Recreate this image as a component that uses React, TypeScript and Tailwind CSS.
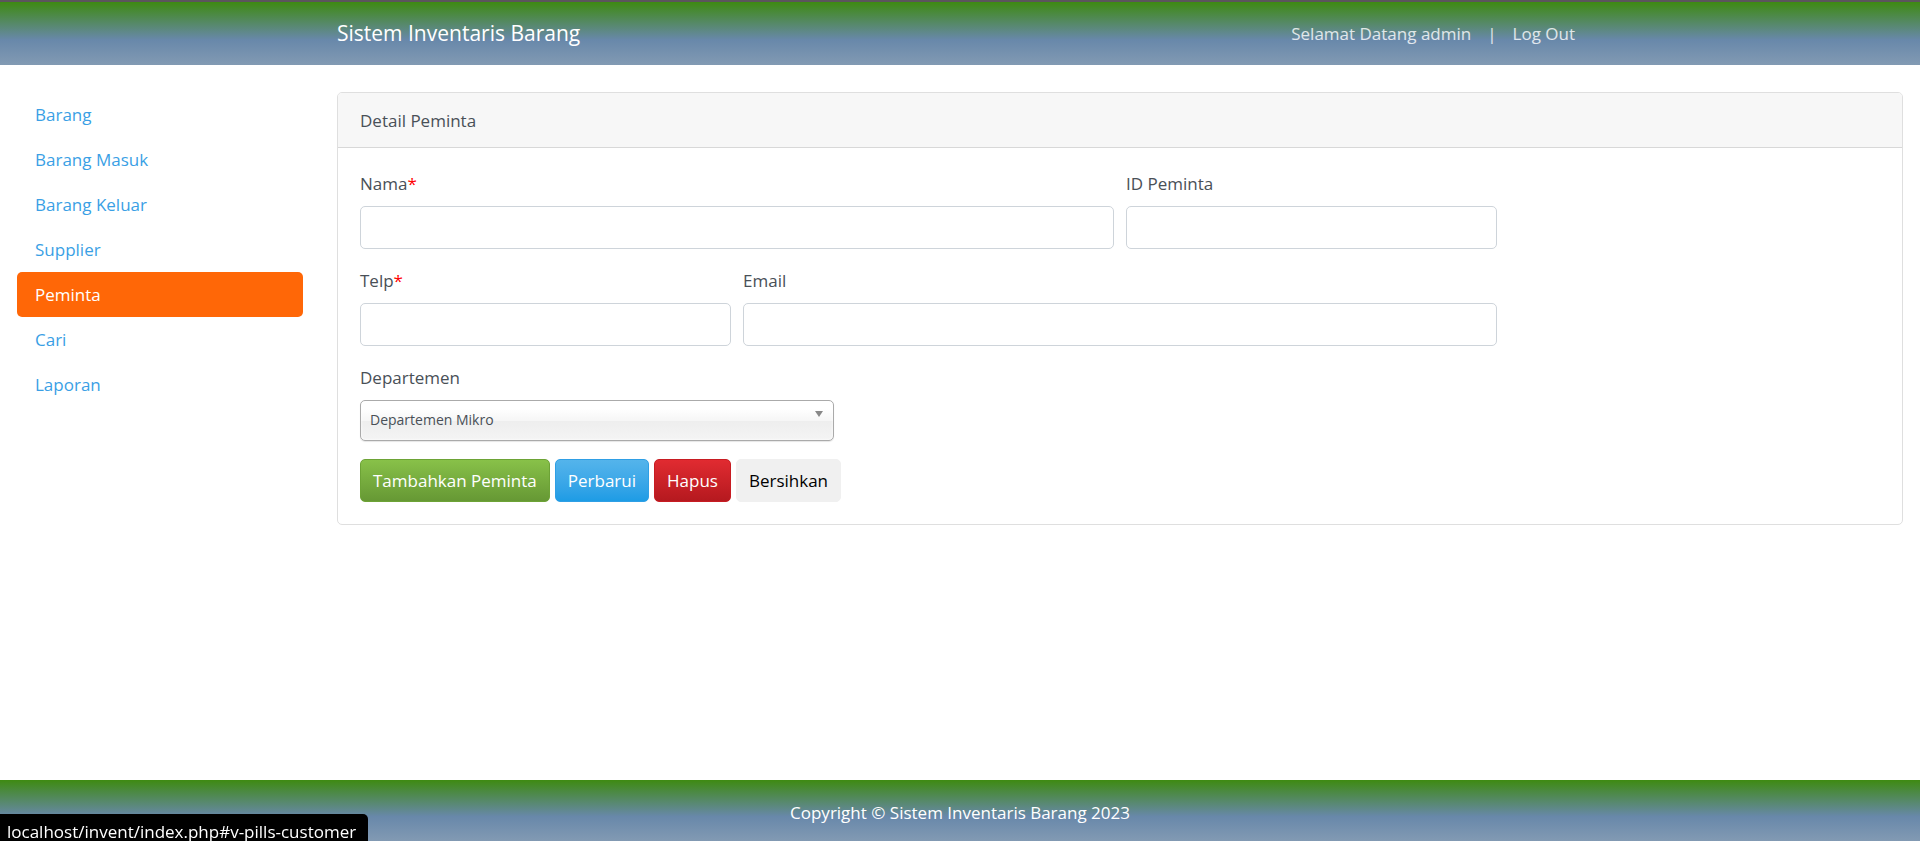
import React from "react";

const navItems = ["Barang", "Barang Masuk", "Barang Keluar", "Supplier", "Peminta", "Cari", "Laporan"];

const barGradient = "bg-[linear-gradient(180deg,#3e8a12_0%,#6888aa_60%,#829ab3_100%)]";

type FieldProps = {
  id: string;
  label: string;
  required?: boolean;
  wide?: boolean;
};

function Field({ id, label, required, wide }: FieldProps) {
  return (
    <div className={wide ? "col-span-6" : "col-span-3"}>
      <label htmlFor={id} className="mb-[9px] block">
        {label}
        {required && <span className="text-[#ff0000]">*</span>}
      </label>
      <input
        id={id}
        type="text"
        className="block h-[43px] w-full rounded-[5px] border border-[#ced4da] bg-white px-3 text-[#495057] outline-none"
      />
    </div>
  );
}

export default function App() {
  return (
    <div className="flex min-h-screen flex-col bg-white font-['Open_Sans','Noto_Sans',sans-serif] text-[17px] leading-[27px] text-[#495057]">
      <header className={`border-t-2 border-[#5c555c] ${barGradient}`}>
        <div className="mx-auto flex h-[63px] max-w-[1280px] items-center justify-between px-[17px]">
          <a href="#" className="text-[21px] text-white">Sistem Inventaris Barang</a>
          <nav className="flex items-center gap-4 pr-2 text-white/80">
            <span>Selamat Datang admin</span>
            <span>|</span>
            <a href="#logout">Log Out</a>
          </nav>
        </div>
      </header>

      <div className="grid grow grid-cols-6 items-start pt-[27px]">
        <nav className="flex flex-col px-[17px]">
          {navItems.map((item) => (
            <a
              key={item}
              href="#"
              className={
                item === "Peminta"
                  ? "rounded-[5px] bg-[#ff6707] px-[18px] py-[9px] text-white"
                  : "rounded-[5px] px-[18px] py-[9px] text-[#3a9fe5]"
              }
            >
              {item}
            </a>
          ))}
        </nav>

        <main className="col-span-5 px-[17px]">
          <section className="rounded-[5px] border border-[#dfdfdf]">
            <h1 className="rounded-t border-b border-[#d8d8d8] bg-[#f7f7f7] px-[22px] pt-[14px] pb-[13px]">Detail Peminta</h1>
            <form className="p-[22px]" onSubmit={(e) => e.preventDefault()}>
              <div className="grid grid-cols-12 gap-x-3 gap-y-[18px]">
                <Field id="nama" label="Nama" required wide />
                <Field id="id-peminta" label="ID Peminta" />
                <div className="col-span-3" />
                <Field id="telp" label="Telp" required />
                <Field id="email" label="Email" wide />
              </div>
              <div className="mt-[18px]">
                <label htmlFor="departemen" className="mb-[9px] block">Departemen</label>
                <div className="relative w-[474px] max-w-full">
                  <select
                    id="departemen"
                    className="block h-[41px] w-full appearance-none rounded-[5px] border border-[#aaaaaa] bg-[linear-gradient(180deg,#ffffff_20%,#f6f6f6_50%,#eeeeee_52%,#f4f4f4_100%)] px-[9px] pb-[2px] text-sm text-[#495057] shadow-[inset_0_0_3px_#ffffff,0_1px_1px_rgba(0,0,0,0.1)] outline-none"
                  >
                    <option>Departemen Mikro</option>
                  </select>
                  <svg aria-hidden="true" viewBox="0 0 8 6" className="pointer-events-none absolute top-[11px] right-[11px] h-[6px] w-2">
                    <path d="M0 0h8L4 6z" fill="#888888" />
                  </svg>
                </div>
              </div>
              <div className="mt-[18px] flex gap-[5px]">
                <button type="button" className="rounded-[5px] border border-[#6da336] bg-linear-to-b from-[#88c149] to-[#669834] px-3 py-[7px] text-white">
                  Tambahkan Peminta
                </button>
                <button type="button" className="rounded-[5px] border border-[#2f9fe5] bg-linear-to-b from-[#54b4eb] to-[#1d9ce5] px-3 py-[7px] text-white">
                  Perbarui
                </button>
                <button type="button" className="rounded-[5px] border border-[#c71c22] bg-linear-to-b from-[#e12b31] to-[#b5191f] px-3 py-[7px] text-white">
                  Hapus
                </button>
                <button type="button" className="rounded-[5px] border border-[#f0f0f0] bg-[#f0f0f0] px-3 py-[7px] text-black">
                  Bersihkan
                </button>
              </div>
            </form>
          </section>
        </main>
      </div>

      <footer className={`pt-[19px] pb-[15px] text-center text-white ${barGradient}`}>
        Copyright © Sistem Inventaris Barang 2023
      </footer>

      <div className="fixed bottom-0 left-0 h-[27px] rounded-tr-[5px] bg-black pt-1 pr-3 pl-[7px] text-[17px] text-white">
        localhost/invent/index.php#v-pills-customer
      </div>
    </div>
  );
}
